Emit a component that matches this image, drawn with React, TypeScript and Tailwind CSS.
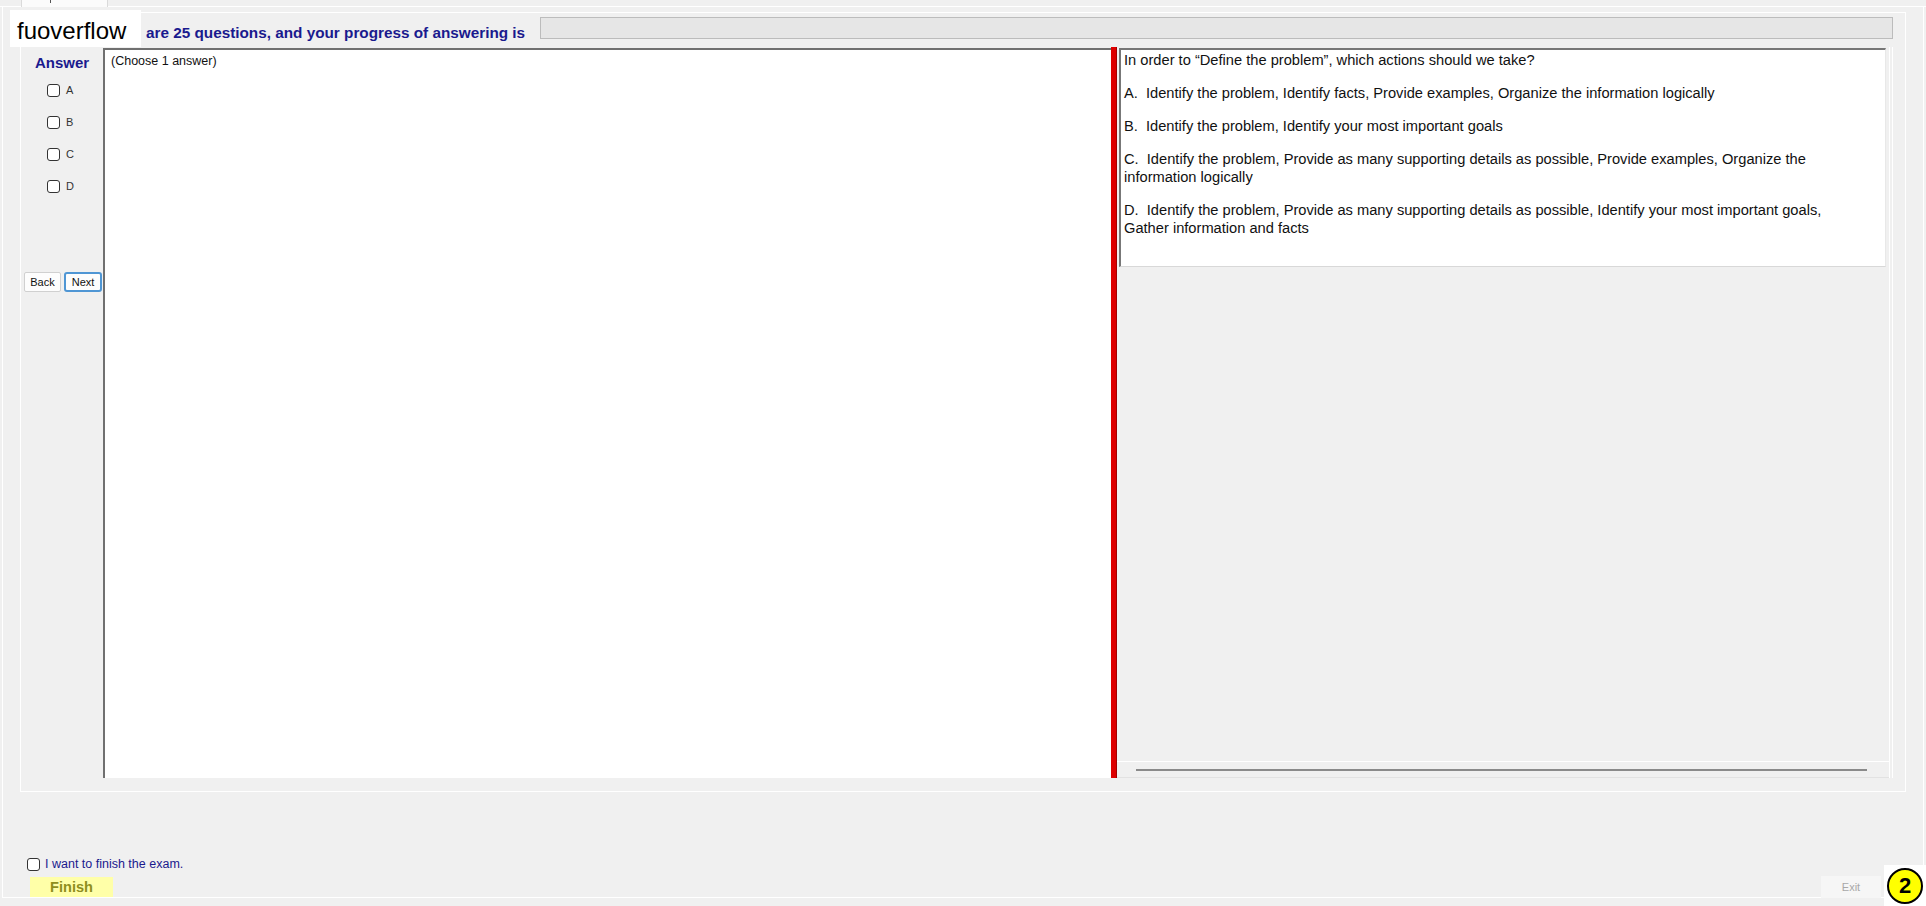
import React from "react";

const font = "font-['Liberation_Sans',Arial,sans-serif]";

function Check() {
  return <div className="w-[13px] h-[13px] bg-white border border-[#333333] rounded-[3px] shrink-0" />;
}

export default function App() {
  const options = ["A", "B", "C", "D"];
  return (
    <div className={`w-[1926px] h-[906px] bg-[#f0f0f0] overflow-hidden relative ${font}`}>
      {/* tab strip */}
      <div className="h-[7px] flex border-b border-white">
        <div className="ml-[21px] w-[87px] h-[7px] bg-[#fbfbfb] border-x border-[#dadada] relative">
          <div className="absolute left-[28px] top-0 w-[1px] h-[3px] bg-[#555]" />
        </div>
      </div>

      {/* page frame */}
      <div className="mx-[2px] h-[891px] border-l border-r border-b border-white flex flex-col">
        {/* main panel */}
        <div className="mt-[5px] ml-[17px] w-[1886px] h-[780px] border border-white flex flex-col shrink-0">
          {/* header */}
          <div className="h-[34px] flex items-start shrink-0">
            <div className="ml-[125px] mt-[11px] text-[15.3px] leading-[18px] font-bold text-[#1a1a8e] whitespace-nowrap">
              are 25 questions, and your progress of answering is
            </div>
            <div className="ml-auto mr-[12px] mt-[4px] w-[1353px] h-[22px] bg-[#e6e6e6] border border-[#bcbcbc]" />
          </div>

          {/* main row */}
          <div className="h-[731px] flex shrink-0">
            {/* answer column */}
            <div className="w-[82px] flex flex-col shrink-0">
              <div className="pt-[7px] text-center text-[15px] leading-[18px] font-bold text-[#1a1a8e]">Answer</div>
              <div className="mt-[12px] flex flex-col gap-[19px]">
                {options.map((o) => (
                  <div key={o} className="h-[13px] flex items-center pl-[26px]">
                    <Check />
                    <span className="ml-[6px] text-[11px] leading-[13px] text-[#333]">{o}</span>
                  </div>
                ))}
              </div>
              <div className="mt-[79px] pl-[3px] flex gap-[3px]">
                <button className="w-[37px] h-[20px] bg-[#fdfdfd] border border-[#d0d0d0] rounded-[2px] text-[11px] text-[#111] leading-[18px]">
                  Back
                </button>
                <button className="w-[38px] h-[20px] bg-[#fdfdfd] border-2 border-[#4f96d4] rounded-[3px] text-[11px] text-[#111] leading-[16px]">
                  Next
                </button>
              </div>
            </div>

            {/* question box */}
            <div className="w-[1008px] mt-[1px] h-[730px] bg-white border-t-2 border-l-2 border-[#707070] shrink-0">
              <div className="pl-[6px] pt-[4px] text-[12.5px] leading-[15px] text-[#111]">(Choose 1 answer)</div>
            </div>

            {/* red divider */}
            <div className="w-[6px] h-full bg-[#dd0000] border-r border-[#a30000] shrink-0" />

            {/* right panel */}
            <div className="w-[773px] h-full flex flex-col pt-[1px] border-r border-white shrink-0">
              <div className="ml-[2px] w-[767px] h-[219px] bg-white border-t-2 border-l-2 border-[#777777] border-b border-r border-b-[#d8d8d8] border-r-[#e8e8e8] shrink-0">
                <div className="pl-[3px] pt-[1px] text-[14.67px] leading-[18px] text-[#111] flex flex-col gap-[15px]">
                  <p>In order to “Define the problem”, which actions should we take?</p>
                  <p>A.&nbsp; Identify the problem, Identify facts, Provide examples, Organize the information logically</p>
                  <p>B.&nbsp; Identify the problem, Identify your most important goals</p>
                  <p>
                    C.&nbsp; Identify the problem, Provide as many supporting details as possible, Provide examples, Organize the
                    <br />
                    information logically
                  </p>
                  <p>
                    D.&nbsp; Identify the problem, Provide as many supporting details as possible, Identify your most important goals,
                    <br />
                    Gather information and facts
                  </p>
                </div>
              </div>
              <div className="flex-1" />
              <div className="h-[17px] border-t border-white border-b border-b-[#e2e2e2] flex items-center shrink-0">
                <div className="ml-[19px] w-[731px] h-[2px] bg-[#8a8a8a]" />
              </div>
            </div>

            {/* right gap */}
            <div className="flex-1 flex">
              <div className="ml-[2px] w-[1px] h-[731px] bg-white" />
            </div>
          </div>
        </div>

        {/* bottom controls */}
        <div className="mt-[65px] ml-[24px] h-[14px] flex items-center">
          <Check />
          <span className="ml-[5px] text-[12.5px] leading-[14px] text-[#1a1a8e]">I want to finish the exam.</span>
        </div>
        <div className="mt-[5px] h-[22px] flex items-center">
          <div className="ml-[27px] w-[83px] h-[20px] bg-[#ffffa8] text-center text-[14.6px] leading-[20px] font-bold text-[#8e8e1e]">
            Finish
          </div>
          <div className="ml-auto mr-[42px] w-[60px] h-[22px] bg-[#f6f6f6] text-center text-[11px] leading-[22px] text-[#a8a8a8]">
            Exit
          </div>
        </div>
      </div>

      {/* watermark overlay */}
      <div className="absolute left-[10px] top-[10px] w-[131px] h-[37px] bg-white flex items-start">
        <span className="ml-[7px] mt-[7px] text-[24px] leading-[28px] text-black">fuoverflow</span>
      </div>

      {/* annotation badge */}
      <div className="absolute left-[1884px] top-[865px] w-[42px] h-[41px] bg-white flex items-center justify-center">
        <div className="w-[36px] h-[36px] rounded-full bg-[#ffff00] border-2 border-black flex items-center justify-center text-[22px] font-bold text-black leading-none">
          2
        </div>
      </div>
    </div>
  );
}
